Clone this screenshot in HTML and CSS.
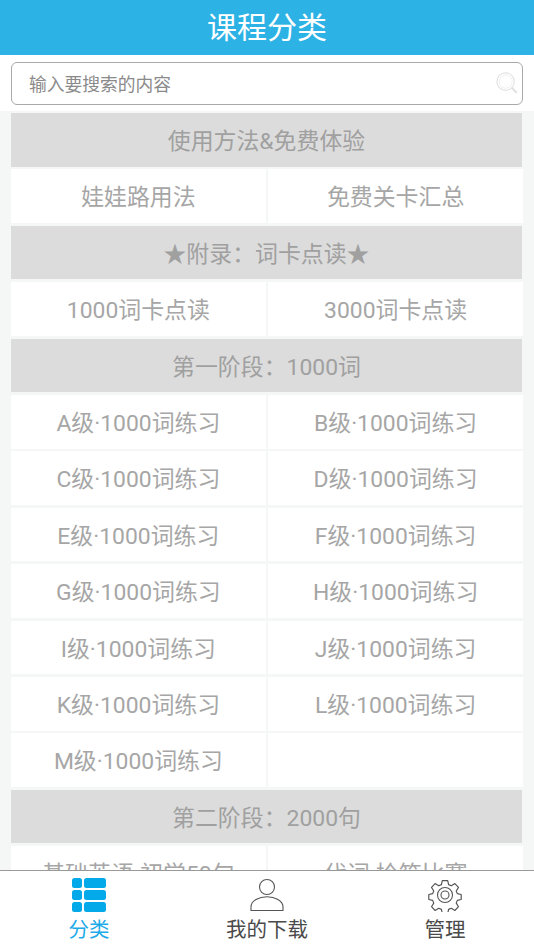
FILE: index.html
```html
<!DOCTYPE html>
<html lang="zh-CN">
<head>
    <meta charset="UTF-8">
    <meta name="viewport" content="width=device-width, initial-scale=1.0">
    <title>课程分类</title>
    <link rel="stylesheet" href="styles.css">
</head>
<body>
    <div id="wrapper">
        <div class="header">课程分类</div>
        <div class="search">
            <div class="search-box">
                <span class="placeholder">输入要搜索的内容</span>
                <svg class="search-icon" viewBox="0 0 24 24" width="22" height="22">
                    <circle cx="10.5" cy="10.5" r="9.5" fill="none" stroke="#e2e2e2" stroke-width="1.2"/>
                    <circle cx="10.5" cy="10.5" r="7.2" fill="none" stroke="#eeeeee" stroke-width="1"/>
                    <path d="M17.5 17.5l4.5 4.5" stroke="#e2e2e2" stroke-width="2.4" stroke-linecap="round"/>
                </svg>
            </div>
        </div>
        <div class="list">
            <div class="section">使用方法&amp;免费体验</div>
            <div class="cell">娃娃路用法</div>
            <div class="cell">免费关卡汇总</div>
            <div class="section">★附录：词卡点读★</div>
            <div class="cell">1000词卡点读</div>
            <div class="cell">3000词卡点读</div>
            <div class="section">第一阶段：1000词</div>
            <div class="cell">A级·1000词练习</div>
            <div class="cell">B级·1000词练习</div>
            <div class="cell">C级·1000词练习</div>
            <div class="cell">D级·1000词练习</div>
            <div class="cell">E级·1000词练习</div>
            <div class="cell">F级·1000词练习</div>
            <div class="cell">G级·1000词练习</div>
            <div class="cell">H级·1000词练习</div>
            <div class="cell">I级·1000词练习</div>
            <div class="cell">J级·1000词练习</div>
            <div class="cell">K级·1000词练习</div>
            <div class="cell">L级·1000词练习</div>
            <div class="cell">M级·1000词练习</div>
            <div class="cell"></div>
            <div class="section">第二阶段：2000句</div>
            <div class="cell">基础英语-初学50句</div>
            <div class="cell">代词-拎箱比赛</div>
        </div>
        <div class="tabs">
            <div class="tab active">
                <svg viewBox="0 0 34 34" width="34" height="34">
                    <rect x="0" y="0" width="10" height="10" rx="2.500" fill="#03a9e8"/>
                    <rect x="12" y="0" width="22" height="10" rx="2.500" fill="#03a9e8"/>
                    <rect x="0" y="12" width="10" height="10" rx="2.500" fill="#03a9e8"/>
                    <rect x="12" y="12" width="22" height="10" rx="2.500" fill="#03a9e8"/>
                    <rect x="0" y="24" width="10" height="10" rx="2.500" fill="#03a9e8"/>
                    <rect x="12" y="24" width="22" height="10" rx="2.500" fill="#03a9e8"/>
                </svg>
                <span>分类</span>
            </div>
            <div class="tab">
                <svg viewBox="0 0 34 34" width="34" height="34">
                    <circle cx="17" cy="9" r="7.500" fill="none" stroke="#555" stroke-width="1.100"/>
                    <path d="M1 32.500v-3.500C1 22.500 9 18.700 17 18.700S33 22.500 33 29v3.500z" fill="none" stroke="#555" stroke-width="1.100"/>
                </svg>
                <span>我的下载</span>
            </div>
            <div class="tab">
                <svg viewBox="0 0 34 34" width="34" height="34">
                    <path d="M14 1h6l1 4.500 3 1.300 4-2.500 4 4.200-2.500 4 1.200 3 4.300 1v5.500l-4.300 1-1.200 3 2.500 4-4 4.200-4-2.500-3 1.300-1 4.500h-6l-1-4.500-3-1.300-4 2.500-4-4.200 2.500-4-1.200-3-4.300-1v-5.500l4.300-1 1.200-3-2.500-4 4-4.200 4 2.500 3-1.300z" transform="translate(1.700 1.700) scale(.9)" fill="none" stroke="#555" stroke-width="1.300" stroke-linejoin="round"/>
                    <circle cx="17" cy="17" r="7.500" fill="none" stroke="#555" stroke-width="1.100"/>
                    <circle cx="17" cy="17" r="4" fill="none" stroke="#555" stroke-width="1.100"/>
                </svg>
                <span>管理</span>
            </div>
        </div>
    </div>
</body>
</html>
```

FILE: styles.css
```css
* {
    margin: 0;
    padding: 0;
    box-sizing: border-box;
}
body {
    font-family: Roboto, "Noto Sans CJK SC", sans-serif;
    background-color: #f5f7f7;
}
#wrapper {
    height: 950px;
    display: flex;
    flex-direction: column;
    overflow: hidden;
}
.header {
    height: 55px;
    flex: none;
    background-color: #2cb2e4;
    color: white;
    font-size: 30px;
    line-height: 55px;
    text-align: center;
}
.search {
    height: 56px;
    flex: none;
    padding: 7px 11px 0;
    background-color: white;
}
.search-box {
    height: 43px;
    border: solid 1px #a9a9a9;
    border-radius: 6px;
    padding: 0 4px 2px 17px;
    display: flex;
    align-items: center;
    justify-content: space-between;
}
.placeholder {
    color: #8a8a8a;
    font-size: 17.750px;
}
.list {
    flex: 1;
    min-height: 0;
    overflow: hidden;
    padding: 2px 11px 0;
    display: grid;
    grid-template-columns: 254.750px 254.750px;
    grid-auto-rows: 53.600px;
    gap: 2.800px 2.500px;
    align-content: start;
}
.section {
    grid-column: 1 / 3;
    margin-right: 1px;
    background-color: #dcdcdc;
    color: #a0a0a0;
    font-size: 22.900px;
    line-height: 57px;
    text-align: center;
}
.cell {
    background-color: white;
    color: #a6a6a6;
    font-size: 22.900px;
    line-height: 57px;
    text-align: center;
}
.tabs {
    height: 80px;
    flex: none;
    background-color: white;
    border-top: solid 1px #999;
    display: flex;
}
.tab {
    flex: 1;
    padding-top: 7px;
    display: flex;
    flex-direction: column;
    align-items: center;
    color: #4a4a4a;
    font-size: 20.500px;
    line-height: 36px;
}
.tab.active {
    color: #1eaae8;
}
```
